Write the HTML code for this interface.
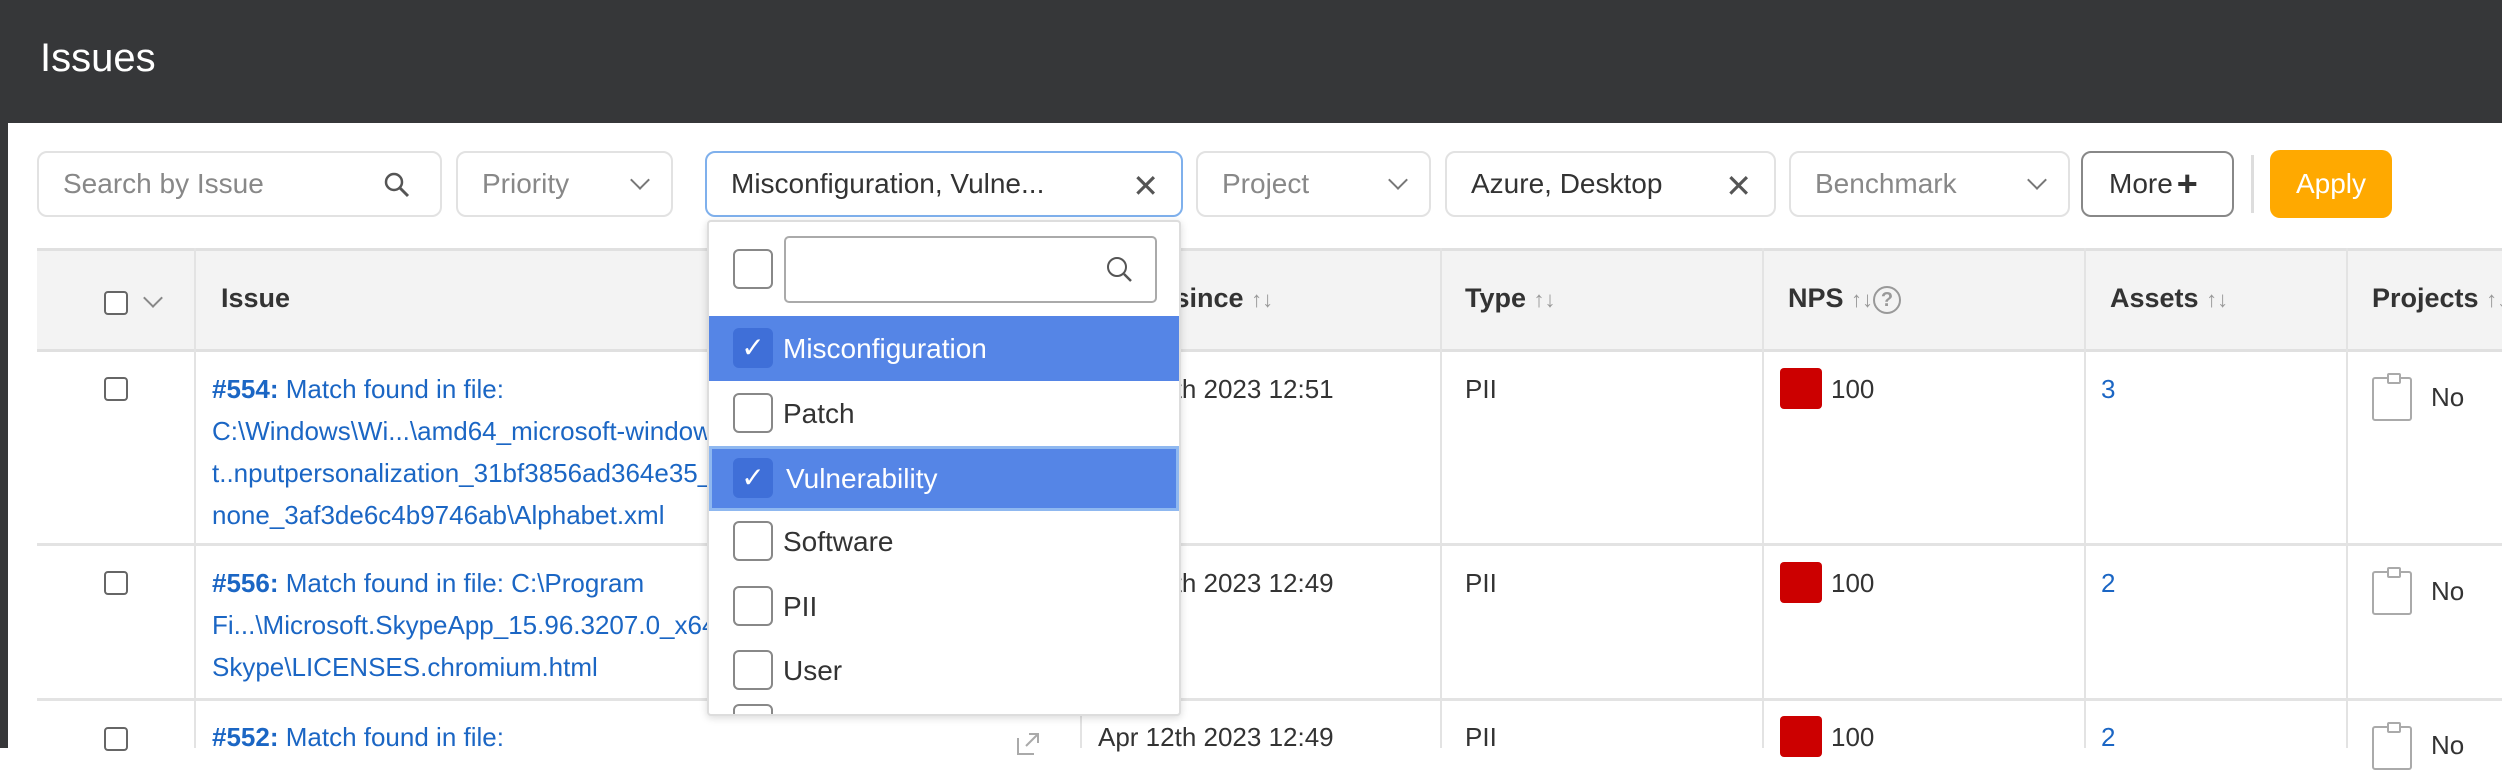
<!DOCTYPE html>
<html><head><meta charset="utf-8"><style>
*{box-sizing:border-box;margin:0;padding:0}
body{width:2502px;height:748px;overflow:hidden;background:#fff;font-family:"Liberation Sans",sans-serif;position:relative;color:#333}
.abs{position:absolute}
.hdr{left:0;top:0;width:2502px;height:123px;background:#363739}
.lstrip{left:0;top:0;width:8px;height:748px;background:#363739}
.title{left:40px;top:36px;font-size:40px;color:#fff}
.f{position:absolute;top:151px;height:66px;border:2px solid #e2e2e2;border-radius:10px;background:#fff;font-size:28px;color:#888;display:flex;align-items:center;padding-left:24px}
.f.dark{color:#333}
.chev{position:absolute;right:24px;top:20px;width:14px;height:14px;border-right:2px solid #777;border-bottom:2px solid #777;transform:rotate(45deg)}
.x{position:absolute;right:22px;top:14px;font-size:32px;color:#555;font-weight:300}
.th{position:absolute;top:248px;height:104px;background:#f3f3f3;border-top:3px solid #e0e0e0;border-bottom:3px solid #e0e0e0}
.tt{position:absolute;font-size:27px;font-weight:bold;color:#333;top:283px;white-space:nowrap}
.vl{position:absolute;top:248px;width:2px;height:500px;background:#e3e3e3}
.hl{position:absolute;left:37px;width:2465px;height:3px;background:#e3e3e3}
.cb{position:absolute;width:24px;height:24px;border:2px solid #666;border-radius:4px;background:#fff}
.link{position:absolute;left:212px;font-size:26px;line-height:42px;color:#1b66c4;white-space:nowrap}
.link b{color:#1b66c4}
.cell{position:absolute;font-size:26px;color:#333;white-space:nowrap}
.red{position:absolute;width:42px;height:41px;background:#cc0000;border-radius:4px}
.clip{position:absolute;width:40px;height:44px;border:2px solid #aaa;border-radius:3px}
.clip:after{content:"";position:absolute;left:13px;top:-6px;width:10px;height:7px;border:2px solid #aaa;border-radius:2px;background:#fff}
.dd{left:707px;top:220px;width:474px;height:496px;background:#fff;border:2px solid #ddd;border-radius:4px;box-shadow:0 2px 8px rgba(0,0,0,.15);overflow:hidden}
.opt{position:absolute;left:0;width:470px;height:65px;font-size:28px;color:#333;display:flex;align-items:center;padding-left:74px}
.opt.sel{background:#5585e6;color:#fff}
.ocb{position:absolute;left:24px;top:12px;width:40px;height:40px;border:2px solid #888;border-radius:6px;background:#fff}
.sel .ocb{background:#3f6fd8;border-color:#3f6fd8;color:#fff;font-size:28px;text-align:center;line-height:36px}
.sort{color:#999;font-weight:normal;font-size:22px}
</style></head><body>
<div class="abs hdr"></div>
<div class="abs lstrip"></div>
<div class="abs title">Issues</div>

<div class="f" style="left:37px;width:405px">Search by Issue
<svg class="abs" style="left:343px;top:17px" width="30" height="30" viewBox="0 0 30 30"><circle cx="12" cy="12" r="8" fill="none" stroke="#555" stroke-width="2.5"/><path d="M18 18l8 8" stroke="#555" stroke-width="3"/></svg></div>
<div class="f" style="left:456px;width:217px">Priority<div class="chev"></div></div>
<div class="f dark" style="left:705px;width:478px;border-color:#7fb0ec">Misconfiguration, Vulne...<span class="x">✕</span></div>
<div class="f" style="left:1196px;width:235px">Project<div class="chev"></div></div>
<div class="f dark" style="left:1445px;width:331px">Azure, Desktop<span class="x">✕</span></div>
<div class="f" style="left:1789px;width:281px">Benchmark<div class="chev"></div></div>
<div class="f dark" style="left:2081px;width:153px;border-color:#888;padding-left:26px">More <b style="font-size:36px;margin-left:4px">+</b></div>
<div class="abs" style="left:2251px;top:155px;width:3px;height:58px;background:#ddd"></div>
<div class="abs" style="left:2270px;top:150px;width:122px;height:68px;background:#ffa900;border-radius:10px;color:#fff;font-size:28px;text-align:center;line-height:68px">Apply</div>

<div class="th" style="left:37px;width:2465px"></div>
<div class="vl" style="left:194px"></div>
<div class="vl" style="left:1080px"></div>
<div class="vl" style="left:1440px"></div>
<div class="vl" style="left:1762px"></div>
<div class="vl" style="left:2084px"></div>
<div class="vl" style="left:2346px"></div>
<div class="hl" style="top:543px"></div>
<div class="hl" style="top:698px"></div>

<div class="cb" style="left:104px;top:291px"></div>
<div class="abs" style="left:146px;top:291px;width:14px;height:14px;border-right:2px solid #888;border-bottom:2px solid #888;transform:rotate(45deg)"></div>
<div class="tt" style="left:221px">Issue</div>
<div class="tt" style="left:1098px">Open since <span class="sort">↑↓</span></div>
<div class="tt" style="left:1465px">Type <span class="sort">↑↓</span></div>
<div class="tt" style="left:1788px">NPS <span class="sort">↑↓</span><span style="display:inline-block;width:28px;height:28px;border:2px solid #999;border-radius:50%;font-size:20px;color:#999;text-align:center;line-height:24px;vertical-align:middle">?</span></div>
<div class="tt" style="left:2110px">Assets <span class="sort">↑↓</span></div>
<div class="tt" style="left:2372px">Projects <span class="sort">↑↓</span></div>

<div class="cb" style="left:104px;top:377px"></div>
<div class="link" style="top:368px"><b>#554:</b> Match found in file:<br>C:\Windows\Wi...\amd64_microsoft-windows-<br>t..nputpersonalization_31bf3856ad364e35_10.0<br>none_3af3de6c4b9746ab\Alphabet.xml</div>
<div class="cell" style="left:1098px;top:374px">Apr 12th 2023 12:51</div>
<div class="cell" style="left:1465px;top:374px">PII</div>
<div class="red" style="left:1780px;top:368px"></div><div class="cell" style="left:1831px;top:374px">100</div>
<div class="cell" style="left:2101px;top:374px;color:#1b66c4">3</div>
<div class="clip" style="left:2372px;top:377px"></div><div class="cell" style="left:2431px;top:382px">No</div>

<div class="cb" style="left:104px;top:571px"></div>
<div class="link" style="top:562px"><b>#556:</b> Match found in file: C:\Program<br>Fi...\Microsoft.SkypeApp_15.96.3207.0_x64<br>Skype\LICENSES.chromium.html</div>
<div class="cell" style="left:1098px;top:568px">Apr 12th 2023 12:49</div>
<div class="cell" style="left:1465px;top:568px">PII</div>
<div class="red" style="left:1780px;top:562px"></div><div class="cell" style="left:1831px;top:568px">100</div>
<div class="cell" style="left:2101px;top:568px;color:#1b66c4">2</div>
<div class="clip" style="left:2372px;top:571px"></div><div class="cell" style="left:2431px;top:576px">No</div>

<div class="cb" style="left:104px;top:727px"></div>
<div class="link" style="top:716px"><b>#552:</b> Match found in file:</div>
<div class="cell" style="left:1098px;top:722px">Apr 12th 2023 12:49</div>
<div class="cell" style="left:1465px;top:722px">PII</div>
<div class="red" style="left:1780px;top:716px"></div><div class="cell" style="left:1831px;top:722px">100</div>
<div class="cell" style="left:2101px;top:722px;color:#1b66c4">2</div>
<div class="clip" style="left:2372px;top:726px"></div><div class="cell" style="left:2431px;top:730px">No</div>
<svg class="abs" style="left:1014px;top:730px" width="28" height="28" viewBox="0 0 28 28"><path d="M4 8v16h16M12 16L24 4M15 4h9v9" fill="none" stroke="#aaa" stroke-width="2"/></svg>

<div class="abs dd">
  <div class="abs" style="left:24px;top:27px;width:40px;height:40px;border:2px solid #888;border-radius:6px"></div>
  <div class="abs" style="left:75px;top:14px;width:373px;height:67px;border:2px solid #aaa;border-radius:5px">
    <svg class="abs" style="left:318px;top:16px" width="32" height="32" viewBox="0 0 32 32"><circle cx="13" cy="13" r="9" fill="none" stroke="#555" stroke-width="2"/><path d="M20 20l7 7" stroke="#555" stroke-width="2.5"/></svg>
  </div>
  <div class="opt sel" style="top:94px"><div class="ocb">✓</div>Misconfiguration</div>
  <div class="opt" style="top:159px"><div class="ocb"></div>Patch</div>
  <div class="opt sel" style="top:224px;border:3px solid #8fb8f0"><div class="ocb" style="top:9px;left:21px">✓</div>Vulnerability</div>
  <div class="opt" style="top:287px"><div class="ocb"></div>Software</div>
  <div class="opt" style="top:352px"><div class="ocb"></div>PII</div>
  <div class="opt" style="top:416px"><div class="ocb"></div>User</div>
  <div class="opt" style="top:470px"><div class="ocb"></div></div>
</div>
</body></html>
